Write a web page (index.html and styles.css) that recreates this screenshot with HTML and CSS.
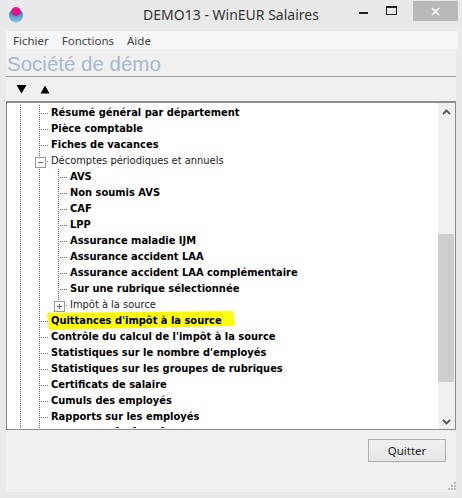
FILE: index.html
```html
<!DOCTYPE html>
<html lang="fr">
<head>
<meta charset="utf-8">
<title>DEMO13 - WinEUR Salaires</title>
<link rel="stylesheet" href="styles.css">
</head>
<body>
<div class="window">
  <header class="titlebar">
    <svg class="logo" width="16" height="17" viewBox="0 0 16 17">
      <defs>
        <linearGradient id="ball" x1="0" y1="0" x2="0" y2="1">
          <stop offset="0" stop-color="#1f6f9c"/><stop offset="1" stop-color="#8cc4e8"/>
        </linearGradient>
      </defs>
      <circle cx="8" cy="9.5" r="7" fill="url(#ball)"/>
      <circle cx="8" cy="5.5" r="4.5" fill="#e8108c"/>
    </svg>
    <div class="title">DEMO13 - WinEUR Salaires</div>
    <div class="controls">
      <span class="ctl"><i class="min"></i></span>
      <span class="ctl"><i class="max"></i></span>
      <span class="close">
        <svg width="9" height="9" viewBox="0 0 9 9"><path d="M1 1l7 7M8 1l-7 7" stroke="#fff" stroke-width="1.6"/></svg>
      </span>
    </div>
  </header>
  <nav class="menubar">
    <span>Fichier</span><span>Fonctions</span><span>Aide</span>
  </nav>
  <div class="content">
    <div class="company">Société de démo</div>
    <div class="toolbar">
      <svg width="11" height="10" viewBox="0 0 11 10"><path d="M0.5 1h10L5.5 9.5z" fill="#000"/></svg>
      <svg width="10" height="9" viewBox="0 0 10 9"><path d="M5 0.5L9.5 8.5H0.5z" fill="#000"/></svg>
    </div>
    <div class="treebox">
      <div class="tree">
        <svg class="marker" width="190" height="20" viewBox="0 0 190 20"><path d="M1 3 L185 1 L187 14 L3 18 Z" fill="#fcfc0c" stroke="#fcfc0c" stroke-width="2" stroke-linejoin="round"/></svg>
        <div class="row"><i class="g"></i><i class="c"></i><b>Résumé général par département</b></div>
        <div class="row"><i class="g"></i><i class="c"></i><b>Pièce comptable</b></div>
        <div class="row"><i class="g"></i><i class="c"></i><b>Fiches de vacances</b></div>
        <div class="row"><i class="g"></i><i class="c exp minus"></i><span>Décomptes périodiques et annuels</span></div>
        <div class="row"><i class="g"></i><i class="g"></i><i class="c"></i><b>AVS</b></div>
        <div class="row"><i class="g"></i><i class="g"></i><i class="c"></i><b>Non soumis AVS</b></div>
        <div class="row"><i class="g"></i><i class="g"></i><i class="c"></i><b>CAF</b></div>
        <div class="row"><i class="g"></i><i class="g"></i><i class="c"></i><b>LPP</b></div>
        <div class="row"><i class="g"></i><i class="g"></i><i class="c"></i><b>Assurance maladie IJM</b></div>
        <div class="row"><i class="g"></i><i class="g"></i><i class="c"></i><b>Assurance accident LAA</b></div>
        <div class="row"><i class="g"></i><i class="g"></i><i class="c"></i><b>Assurance accident LAA complémentaire</b></div>
        <div class="row"><i class="g"></i><i class="g"></i><i class="c"></i><b>Sur une rubrique sélectionnée</b></div>
        <div class="row"><i class="g"></i><i class="g"></i><i class="c exp plus"></i><span>Impôt à la source</span></div>
        <div class="row"><i class="g"></i><i class="c"></i><b>Quittances d'impôt à la source</b></div>
        <div class="row"><i class="g"></i><i class="c"></i><b>Contrôle du calcul de l'impôt à la source</b></div>
        <div class="row"><i class="g"></i><i class="c"></i><b>Statistiques sur le nombre d'employés</b></div>
        <div class="row"><i class="g"></i><i class="c"></i><b>Statistiques sur les groupes de rubriques</b></div>
        <div class="row"><i class="g"></i><i class="c"></i><b>Certificats de salaire</b></div>
        <div class="row"><i class="g"></i><i class="c"></i><b>Cumuls des employés</b></div>
        <div class="row"><i class="g"></i><i class="c"></i><b>Rapports sur les employés</b></div>
        <div class="row"><i class="g"></i><i class="c"></i><i class="ticks"></i></div>
      </div>
      <div class="scrollbar">
        <svg class="arrow" width="9" height="6" viewBox="0 0 9 6"><path d="M1 5l3.5-3.5L8 5" fill="none" stroke="#555" stroke-width="1.8"/></svg>
        <div class="track"><div class="thumb"></div></div>
        <svg class="arrow" width="9" height="6" viewBox="0 0 9 6"><path d="M1 1l3.5 3.5L8 1" fill="none" stroke="#555" stroke-width="1.8"/></svg>
      </div>
    </div>
    <div class="footer">
      <button class="quit">Quitter</button>
      <svg class="grip" width="8" height="8" viewBox="0 0 8 8"><path d="M6 0h2v2H6zM3 3h2v2H3zM6 3h2v2H6zM0 6h2v2H0zM3 6h2v2H3zM6 6h2v2H6z" fill="#b9b9b9"/></svg>
    </div>
  </div>
</div>
</body>
</html>
```
FILE: styles.css
```css
* { box-sizing: border-box; }
html, body { margin: 0; height: 100%; }
body { background: #e9e9e9; overflow: hidden; font-family: "Noto Sans", sans-serif; }
.window { width: 462px; height: 498px; display: flex; flex-direction: column; padding-left: 6px; }
.titlebar { height: 31px; flex: none; display: flex; position: relative; margin-left: -6px; }
.logo { margin: 6px 0 0 8px; }
.title { position: absolute; left: 0; right: 0; top: 5px; text-align: center; font: 14px/20px "Noto Sans", sans-serif; color: #333; }
.controls { position: absolute; right: 4px; top: 1px; display: flex; }
.ctl { width: 27px; height: 20px; position: relative; }
.min { position: absolute; left: 0; top: 11px; width: 9px; height: 2px; background: #222; }
.max { position: absolute; left: 0; top: 5px; width: 11px; height: 9px; border: 1px solid #222; border-top-width: 2px; }
.close { width: 45px; height: 20px; background: #b9b9b9; display: flex; align-items: center; justify-content: center; }
.menubar { height: 19px; flex: none; width: 452px; background: #f5f6f7; display: flex; gap: 13px; padding-left: 7px; align-items: center; font-size: 11.5px; color: #444; }
.content { flex: 1; width: 450px; display: flex; flex-direction: column; background: #f0f0f0; margin-top: 1px; margin-bottom: 6px; }
.company { height: 26px; flex: none; border-bottom: 1px solid #a0a0a0; font: 20.5px/25px "Liberation Sans", sans-serif; color: #a5b8d0; padding-left: 1px; }
.toolbar { height: 24px; flex: none; display: flex; align-items: center; gap: 13px; padding: 0 0 0 10px; }
.treebox { height: 329px; flex: none; border: 1px solid #8a8a8a; border-width: 2px 1px 1px 1px; border-top-color: #8f8f8f; background: #fff; display: flex; overflow: hidden; }
.tree { flex: 1; position: relative; overflow: hidden; padding-top: 2px; font: 11px/16px "DejaVu Sans Condensed", "DejaVu Sans", sans-serif; color: #000; }
.row { height: 16px; display: flex; position: relative; white-space: nowrap; padding-left: 13px; }
.row b, .row span { position: relative; margin-left: 2px; }
.row b { font-weight: 700; }
.row span { color: #222; }
.g { width: 19px; height: 16px; flex: none; background: repeating-linear-gradient(to bottom, #666 0 1px, transparent 1px 2px) left top / 1px 16px no-repeat; }
.c { width: 10px; height: 16px; flex: none; position: relative; background:
  repeating-linear-gradient(to right, #666 0 1px, transparent 1px 2px) left 8px / 10px 1px no-repeat,
  repeating-linear-gradient(to bottom, #666 0 1px, transparent 1px 2px) left top / 1px 16px no-repeat; }
.exp::after { content: ""; position: absolute; left: -4px; top: 4px; width: 9px; height: 9px; border: 1px solid #9a9a9a; background: linear-gradient(to right, #666, #666) center / 5px 1px no-repeat, #fff; }
.plus::after { background: linear-gradient(to right, #666, #666) center / 5px 1px no-repeat, linear-gradient(to right, #666, #666) center / 1px 5px no-repeat, #fff; }
.ticks { width: 120px; height: 1px; margin: 2px 0 0 2px; background:
  linear-gradient(#333, #333) 65px 0 / 3px 1px no-repeat,
  linear-gradient(#333, #333) 82px 0 / 3px 1px no-repeat,
  linear-gradient(#333, #333) 110px 0 / 3px 1px no-repeat; }
.marker { position: absolute; left: 40px; top: 208px; }
.scrollbar { width: 17px; flex: none; background: #f0f0f0; display: flex; flex-direction: column; align-items: center; }
.arrow { flex: none; margin: 6px 0; }
.track { flex: 1; width: 100%; padding-top: 113px; padding-bottom: 31px; }
.thumb { height: 148px; background: #cdcdcd; margin-right: 1px; }
.footer { flex: 1; position: relative; display: flex; justify-content: flex-end; align-items: flex-start; padding: 9px 10px 0 0; }
.quit { width: 78px; height: 23px; border: 1px solid #adadad; background: linear-gradient(#f0f0f0, #e5e5e5); font: 11.5px "Noto Sans", sans-serif; color: #222; padding: 0; }
.grip { position: absolute; right: 0; bottom: 2px; }
```
